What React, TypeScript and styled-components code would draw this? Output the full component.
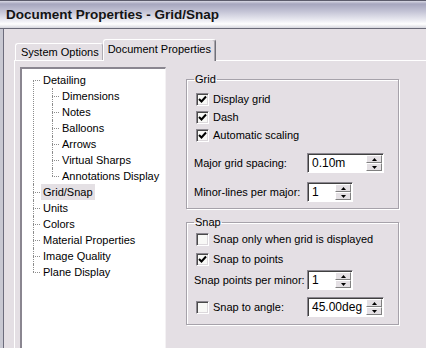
import React from 'react';
import styled, { createGlobalStyle } from 'styled-components';

const GlobalStyle = createGlobalStyle`
  html, body {
    margin: 0;
    padding: 0;
    background: #e4dfe4;
  }
  * {
    box-sizing: border-box;
  }
`;

const Window = styled.div`
  width: 426px;
  height: 348px;
  overflow: hidden;
  background: #e4dfe4;
  font-family: 'Liberation Sans', Arial, sans-serif;
  font-size: 11px;
  color: #000;
  display: flex;
  flex-direction: column;
`;

const TitleBar = styled.div`
  height: 29px;
  flex: none;
  border-top: 1px solid #5c5c6c;
  border-bottom: 1px solid #6a6a78;
  background: linear-gradient(#d8d8e4 0px, #a6a6be 3px, #c2c2d4 10px, #eeeef4 20px, #ffffff 23px, #d6d6de 27px);
  padding: 6px 0 0 6px;
  font-weight: bold;
  font-size: 13.5px;
  color: #141414;
`;

const Frame = styled.div`
  flex: 1;
  border-left: 3px solid #c8c8d2;
  box-shadow: inset 1px 0 0 #6c6c7c;
  padding: 10px 0 0 11px;
  display: flex;
  flex-direction: column;
  min-height: 0;
`;

const TabStrip = styled.div`
  display: flex;
  align-items: flex-end;
  height: 21px;
  flex: none;
  position: relative;
  z-index: 1;
`;

const Tab = styled.div<{ $active?: boolean }>`
  height: ${p => (p.$active ? '22px' : '17px')};
  margin-bottom: ${p => (p.$active ? '-1px' : '0')};
  padding: ${p => (p.$active ? '3px 4px 0 4px' : '2px 3px 0 5px')};
  margin-left: ${p => (p.$active ? '0' : '1px')};
  border-top: 1px solid #ffffff;
  border-left: 1px solid #ffffff;
  border-right: 1px solid ${p => (p.$active ? '#707078' : '#b0acb4')};
  border-radius: 3px 3px 0 0;
  background: #e4dfe4;
  white-space: nowrap;
  ${p => p.$active && 'box-shadow: inset -1px 0 0 #a8a4ac;'}
`;

const Panel = styled.div`
  flex: 1;
  min-height: 0;
  border-top: 1px solid #ffffff;
  border-left: 1px solid #ffffff;
  padding: 6px 0 0 5px;
  display: flex;
  align-items: flex-start;
`;

const TreeBox = styled.div`
  width: 146px;
  height: 300px;
  flex: none;
  background: #ffffff;
  border-top: 2px solid #8a8690;
  border-left: 2px solid #8a8690;
  border-right: 1px solid #f4f2f4;
  padding: 3px 0 0 11px;
`;

const TreeList = styled.ul<{ $nested?: boolean }>`
  list-style: none;
  margin: 0 0 0 ${p => (p.$nested ? '11px' : '0')};
  padding: 0;
`;

const TreeItem = styled.li<{ $root?: boolean }>`
  position: relative;
  padding-left: 8px;

  &::before {
    content: '';
    position: absolute;
    left: 0;
    top: 8px;
    width: 7px;
    border-top: 1px dotted #8c8c8c;
  }

  &::after {
    content: '';
    position: absolute;
    left: 0;
    top: 0;
    bottom: 0;
    border-left: 1px dotted #8c8c8c;
  }

  &:first-child::after {
    top: ${p => (p.$root ? '8px' : '0')};
  }

  &:last-child::after {
    bottom: auto;
    height: 8px;
  }
`;

const TreeLabel = styled.div<{ $selected?: boolean }>`
  display: inline-block;
  height: 16px;
  line-height: 16px;
  padding: 0 2px;
  background: ${p => (p.$selected ? '#e4e0e4' : 'transparent')};
  white-space: nowrap;
`;

const RightColumn = styled.div`
  width: 213px;
  margin-left: 20px;
  padding-top: 5px;
  display: flex;
  flex-direction: column;
  gap: 6px;
`;

const Group = styled.fieldset<{ $height: number; $pad: number }>`
  margin: 0;
  height: ${p => p.$height}px;
  padding: ${p => p.$pad}px 0 0 7px;
  border: 1px solid #a6a2aa;
  box-shadow: 1px 1px 0 #ffffff, inset 1px 1px 0 #ffffff;
  display: flex;
  flex-direction: column;
`;

const Legend = styled.legend`
  padding: 0 1px;
  margin-left: 0;
  line-height: 14px;
`;

const CheckRow = styled.div<{ $height: number }>`
  height: ${p => p.$height}px;
  display: flex;
  align-items: center;
  gap: 4px;
  padding-left: 2px;
`;

const Box = styled.span<{ $indent?: number }>`
  width: 13px;
  height: 13px;
  flex: none;
  margin-left: ${p => p.$indent ?? 0}px;
  background: #f8f8f6;
  border-top: 1px solid #8c8890;
  border-left: 1px solid #8c8890;
  border-right: 1px solid #ffffff;
  border-bottom: 1px solid #ffffff;
  box-shadow: inset 1px 1px 0 #4a4a4a, inset -1px -1px 0 #dcd8dc;
  display: flex;
  align-items: center;
  justify-content: center;
`;

const FieldRow = styled.div<{ $top?: number }>`
  display: flex;
  align-items: center;
  height: 20px;
  margin-top: ${p => p.$top ?? 0}px;
`;

const FieldLabel = styled.span<{ $width: number }>`
  width: ${p => p.$width}px;
  flex: none;
  display: flex;
  align-items: center;
  gap: 4px;
  white-space: nowrap;
`;

const Spin = styled.div<{ $width: number }>`
  width: ${p => p.$width}px;
  height: 20px;
  background: #ffffff;
  border-top: 1px solid #8c8890;
  border-left: 1px solid #8c8890;
  border-right: 1px solid #ffffff;
  border-bottom: 1px solid #ffffff;
  box-shadow: inset 1px 1px 0 #404040;
  display: flex;
  align-items: center;
  justify-content: space-between;
  padding: 1px 1px 1px 4px;
  font-size: 12px;
`;

const SpinButtons = styled.div`
  width: 16px;
  height: 16px;
  display: flex;
  flex-direction: column;
`;

const SpinButton = styled.div`
  flex: 1;
  background: #e4e0e4;
  border-top: 1px solid #ffffff;
  border-left: 1px solid #ffffff;
  border-right: 1px solid #808080;
  border-bottom: 1px solid #808080;
  display: flex;
  align-items: center;
  justify-content: center;
`;

const Check = () => (
  <svg width="9" height="9" viewBox="0 0 9 9">
    <path d="M1 4 L3.5 6.5 L8 1.5" stroke="#000" strokeWidth="2" fill="none" />
  </svg>
);

const Arrow = ({ up }: { up?: boolean }) => (
  <svg width="5" height="3" viewBox="0 0 5 3">
    <path d={up ? 'M2.5 0 L5 3 L0 3 Z' : 'M0 0 L5 0 L2.5 3 Z'} fill="#000" />
  </svg>
);

const CheckItem = ({ label, checked, height = 18 }: { label: string; checked?: boolean; height?: number }) => (
  <CheckRow $height={height}>
    <Box>{checked && <Check />}</Box>
    <span>{label}</span>
  </CheckRow>
);

const SpinBox = ({ value, width }: { value: string; width: number }) => (
  <Spin $width={width}>
    <span>{value}</span>
    <SpinButtons>
      <SpinButton>
        <Arrow up />
      </SpinButton>
      <SpinButton>
        <Arrow />
      </SpinButton>
    </SpinButtons>
  </Spin>
);

const detailing = ['Dimensions', 'Notes', 'Balloons', 'Arrows', 'Virtual Sharps', 'Annotations Display'];
const others = ['Units', 'Colors', 'Material Properties', 'Image Quality', 'Plane Display'];

export default function App() {
  return (
    <>
      <GlobalStyle />
      <Window>
        <TitleBar>Document Properties - Grid/Snap</TitleBar>
        <Frame>
          <TabStrip>
            <Tab>System Options</Tab>
            <Tab $active>Document Properties</Tab>
          </TabStrip>
          <Panel>
            <TreeBox>
              <TreeList>
                <TreeItem $root>
                  <TreeLabel>Detailing</TreeLabel>
                  <TreeList $nested>
                    {detailing.map(name => (
                      <TreeItem key={name}>
                        <TreeLabel>{name}</TreeLabel>
                      </TreeItem>
                    ))}
                  </TreeList>
                </TreeItem>
                <TreeItem $root>
                  <TreeLabel $selected>Grid/Snap</TreeLabel>
                </TreeItem>
                {others.map(name => (
                  <TreeItem $root key={name}>
                    <TreeLabel>{name}</TreeLabel>
                  </TreeItem>
                ))}
              </TreeList>
            </TreeBox>
            <RightColumn>
              <Group $height={137} $pad={4}>
                <Legend>Grid</Legend>
                <CheckItem label="Display grid" checked />
                <CheckItem label="Dash" checked />
                <CheckItem label="Automatic scaling" checked />
                <FieldRow $top={9}>
                  <FieldLabel $width={113}>Major grid spacing:</FieldLabel>
                  <SpinBox value="0.10m" width={77} />
                </FieldRow>
                <FieldRow $top={9}>
                  <FieldLabel $width={113}>Minor-lines per major:</FieldLabel>
                  <SpinBox value="1" width={46} />
                </FieldRow>
              </Group>
              <Group $height={110} $pad={0}>
                <Legend>Snap</Legend>
                <CheckItem label="Snap only when grid is displayed" height={20} />
                <CheckItem label="Snap to points" checked height={20} />
                <FieldRow $top={1}>
                  <FieldLabel $width={113}>Snap points per minor:</FieldLabel>
                  <SpinBox value="1" width={46} />
                </FieldRow>
                <FieldRow $top={7}>
                  <FieldLabel $width={113}>
                    <Box $indent={2} />
                    <span>Snap to angle:</span>
                  </FieldLabel>
                  <SpinBox value="45.00deg" width={77} />
                </FieldRow>
              </Group>
            </RightColumn>
          </Panel>
        </Frame>
      </Window>
    </>
  );
}
